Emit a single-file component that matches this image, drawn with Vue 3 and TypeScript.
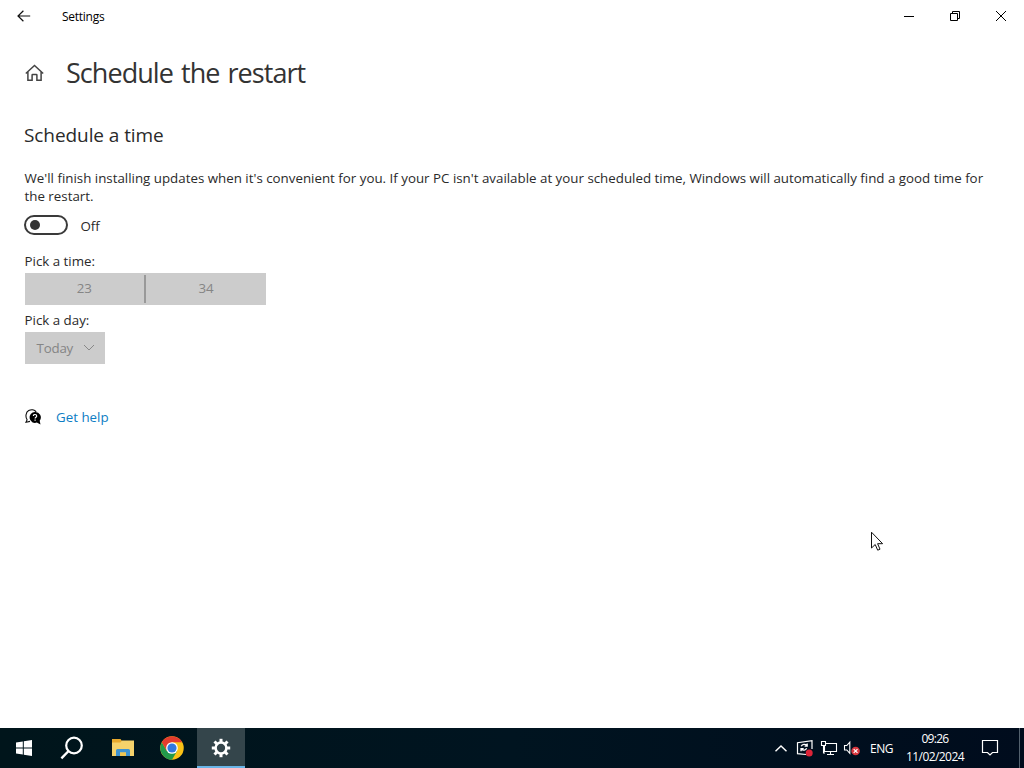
<script setup lang="ts">
import { ref } from 'vue'

const scheduled = ref(false)
const hour = ref('23')
const minute = ref('34')
const day = ref('Today')
const gearTeeth = [0, 45, 90, 135, 180, 225, 270, 315]
</script>

<template>
  <div class="screen">
    <header class="titlebar">
      <button class="back" aria-label="Back">
        <svg width="14" height="12" viewBox="0 0 14 12"><path d="M6.4 0.8 1 6l5.4 5.2M1 6h12.2" fill="none" stroke="#111" stroke-width="1.2" /></svg>
      </button>
      <span class="app-name">Settings</span>
      <div class="window-buttons">
        <button aria-label="Minimize"><svg width="12" height="12"><path d="M1 6.5h10" stroke="#000" /></svg></button>
        <button aria-label="Restore"><svg width="12" height="12"><path d="M1.5 3.5h7v7h-7zM3.5 3.5v-2h7v7h-2" fill="none" stroke="#000" /></svg></button>
        <button aria-label="Close"><svg width="12" height="12"><path d="m1 1 10 10M11 1 1 11" stroke="#000" /></svg></button>
      </div>
    </header>

    <main class="content">
      <div class="heading">
        <svg class="home" width="19" height="18" viewBox="0 0 19 18"><path d="M.8 9.500 9.500 1.500l8.700 8M2.900 8V16.300h4.200v-5.300q0-.6.6-.6h3.600q.6 0 .6.6v5.300h4.200V8" fill="none" stroke="#444" stroke-width="1.500" /></svg>
        <h1>Schedule the restart</h1>
      </div>
      <h2>Schedule a time</h2>
      <p class="description"><span class="line">We'll finish installing updates when it's convenient for you. If your PC isn't available at your scheduled time, Windows will automatically find a good time for</span> <span class="line">the restart.</span></p>
      <div class="toggle-row">
        <button class="toggle" role="switch" :aria-checked="scheduled"><span class="knob"></span></button>
        <span class="state">{{ scheduled ? 'On' : 'Off' }}</span>
      </div>
      <div class="label time-label">Pick a time:</div>
      <div class="time-picker">
        <span>{{ hour }}</span>
        <i class="divider"></i>
        <span>{{ minute }}</span>
      </div>
      <div class="label day-label">Pick a day:</div>
      <div class="day-picker">
        <span>{{ day }}</span>
        <svg width="12" height="8" viewBox="0 0 12 8"><path d="m1 1 5 5 5-5" fill="none" stroke="#888" stroke-width="1" /></svg>
      </div>
      <div class="help">
        <svg width="17" height="17" viewBox="0 0 17 17">
          <path d="M2.200 10.800C.2 8.200.6 3.200 3.700 1.500 6.300.2 9.600.7 11.200 2.900M2.200 10.600 1 13.200l4-.8" fill="none" stroke="#111" stroke-width="1.100" />
          <path d="M9.900 2.900a5.500 5.500 0 1 0 1.900 10.700l3.700 1.800-.8-3.700A5.500 5.500 0 0 0 9.900 2.900z" fill="#000" />
          <path d="M8.400 6.900c0-1.900 3.300-1.800 3.300.1 0 1.300-1.600 1.300-1.600 2.600M10.100 10.600v1.200" fill="none" stroke="#fff" stroke-width="1.200" />
        </svg>
        <a>Get help</a>
      </div>
    </main>

    <footer class="taskbar">
      <div class="apps">
        <div class="task">
          <svg width="18" height="18" viewBox="0 0 18 18"><path d="M1 3.400 7.800 2.400V8.500H1zM8.800 2.300 17 1v7.500H8.800zM1 9.500h6.800v6.100L1 14.600zM8.800 9.500H17V17l-8.200-1.200z" fill="#fff" /></svg>
        </div>
        <div class="task">
          <svg width="24" height="24" viewBox="0 0 24 24"><circle cx="14" cy="9.500" r="7.800" fill="none" stroke="#fff" stroke-width="2.200" /><path d="M8.600 15 1.400 22.300" stroke="#fff" stroke-width="2.400" /></svg>
        </div>
        <div class="task explorer">
          <svg width="24" height="20" viewBox="0 0 24 20">
            <path d="M1 1h8.500l1.500 2v3H1z" fill="#e7a92d" />
            <path d="M1 4.500h8.500l1.500-2h12V18H1z" fill="#f5d26b" />
            <path d="M5 18v-5.500q0-1.500 1.500-1.500h11q1.500 0 1.500 1.500V18h-4v-3.500H9V18z" fill="#3e93d1" />
            <path d="M9 14.500h6V18H9z" fill="#efc551" />
          </svg>
        </div>
        <div class="task chrome">
          <svg width="24" height="24" viewBox="0 0 48 48">
            <circle cx="24" cy="24" r="23.500" fill="#fbc116" />
            <path d="M3.650 12.250A23.500 23.500 0 0 0 24 47.500L34.200 29.900 24 24 13.800 29.900z" fill="#229a4b" />
            <path d="M3.650 12.250A23.500 23.500 0 0 1 44.350 12.250H24L13.800 29.900z" fill="#e33b2e" />
            <circle cx="24" cy="24" r="11.700" fill="#fff" /><circle cx="24" cy="24" r="9.200" fill="#3178df" />
          </svg>
        </div>
        <div class="task active">
          <svg width="20" height="20" viewBox="-10 -10 20 20">
            <rect v-for="angle in gearTeeth" :key="angle" x="-1.500" y="-9.200" width="3" height="4.200" fill="#fff" :transform="`rotate(${angle})`" />
            <circle r="5.400" fill="none" stroke="#fff" stroke-width="2.500" />
          </svg>
        </div>
      </div>

      <div class="tray">
        <svg class="expand" width="14" height="9" viewBox="0 0 14 9"><path d="m1.500 7.300 5.500-5.400 5.500 5.400" fill="none" stroke="#fff" stroke-width="1.400" /></svg>
        <svg class="update" width="18" height="18" viewBox="0 0 18 18">
          <path d="M10 15.500 1.500 14.700V3.700L16 1.700V10" fill="none" stroke="#fff" stroke-width="1.200" />
          <path d="M5.200 7.300c1-2.300 4.200-2.500 5.600-.7M11.200 4.500v2.700H8.600M10.600 9.300c-.9 2-3.600 2.400-5 .9M5 12.300V9.600h2.700" fill="none" stroke="#fff" stroke-width="1.300" />
          <circle cx="13.200" cy="14" r="3.500" fill="#dc2438" />
        </svg>
        <svg class="network" width="18" height="16" viewBox="0 0 18 16"><path d="M6 3.500h10.500v8H4.500V6M10.500 11.500v3M7 14.500h7M1.500 1.500h4v4h-4zM3.500 5.500v7.500H5" fill="none" stroke="#fff" stroke-width="1.100" /></svg>
        <svg class="volume" width="18" height="16" viewBox="0 0 18 16">
          <path d="M1.500 5.500h2.300l3-3.400v11.300l-3-3.400H1.500z" fill="none" stroke="#fff" stroke-width="1.100" />
          <circle cx="12.600" cy="11" r="4.300" fill="#d9363e" /><path d="m10.700 9.100 3.800 3.800m0-3.800-3.800 3.800" stroke="#fff" stroke-width="1.200" />
        </svg>
        <span class="language">ENG</span>
        <div class="clock"><span class="hours">09:26</span><span class="date">11/02/2024</span></div>
        <svg class="notifications" width="18" height="18" viewBox="0 0 18 18"><path d="M1.500 1.500h15v12h-5L9 16l-2.500-2.500h-5z" fill="none" stroke="#fff" stroke-width="1.200" /></svg>
        <i class="show-desktop"></i>
      </div>
    </footer>

    <svg class="cursor" width="14" height="21" viewBox="0 0 14 21"><path d="M1.500 1.200V17l3.700-3.500 2.500 5.700 2.300-1-2.400-5.500h5z" fill="#fff" stroke="#111" stroke-width="1" /></svg>
  </div>
</template>

<style>
body { margin: 0; overflow: hidden; }
</style>

<style scoped>
.screen {
  position: relative;
  width: 1024px;
  height: 768px;
  display: flex;
  flex-direction: column;
  overflow: hidden;
  background: #fff;
  color: #2a2a2a;
  font-family: "Open Sans", "Noto Sans", sans-serif;
  font-size: 13.330px;
}
svg { display: block; flex: none; }
button { border: 0; padding: 0; background: none; font: inherit; }
.titlebar { display: flex; align-items: center; height: 32px; flex: none; color: #000; }
.back { width: 48px; display: flex; justify-content: center; }
.app-name { margin-left: 14px; font-size: 12px; letter-spacing: -.27px; line-height: 16px; padding-top: 2px; }
.window-buttons { display: flex; margin-left: auto; }
.window-buttons button { width: 46px; height: 32px; display: grid; place-items: center; }
.content { flex: 1; padding: 22px 24px 0 24.500px; }
.heading { display: flex; align-items: center; height: 36px; }
.home { margin-top: 1px; }
h1 { margin: 0 0 0 22.500px; padding-top: 1px; font-size: 27px; font-weight: 400; line-height: 37px; letter-spacing: -.95px; word-spacing: 2px; white-space: nowrap; color: #333; }
h2 { margin: 32px 0 0 -.5px; font-size: 19px; font-weight: 400; line-height: 26px; letter-spacing: -.08px; }
.description { margin: 21px 0 0; line-height: 18px; }
.line { display: block; white-space: nowrap; }
.toggle-row { display: flex; align-items: center; height: 20px; margin-top: 10px; }
.toggle { width: 44px; height: 20px; margin-left: -.5px; box-sizing: border-box; border: 2px solid #3a3a3a; border-radius: 10px; padding-left: 3.500px; display: flex; align-items: center; }
.knob { width: 10px; height: 10px; border-radius: 50%; background: #333; }
.state { margin-left: 12.500px; line-height: 20px; padding-top: 2px; }
.label { line-height: 18px; }
.time-label { margin-top: 17px; }
.time-picker { display: flex; align-items: center; width: 241.500px; height: 32px; margin-top: 3px; background: #ccc; color: #858585; }
.time-picker span { flex: 1; text-align: center; line-height: 18px; padding-bottom: 2px; }
.divider { width: 2px; height: 28px; background: #999; }
.day-label { margin-top: 6px; }
.day-picker { width: 80.400px; height: 32px; margin-top: 3px; box-sizing: border-box; padding: 0 10px 0 12px; display: flex; align-items: center; justify-content: space-between; background: #ccc; color: #858585; }
.day-picker span { letter-spacing: -.2px; }
.help { display: flex; align-items: center; height: 20px; margin-top: 43px; }
.help a { margin-left: 14.500px; color: #0d7dc4; }
.taskbar { height: 40px; flex: none; display: flex; justify-content: space-between; color: #fff; background: linear-gradient(90deg, #00151b, #001420 50%, #000c1d); }
.apps, .tray { display: flex; align-items: center; }
.task { width: 48px; height: 40px; display: grid; place-items: center; }
.explorer { width: 53px; }
.chrome { width: 46px; margin-right: 2px; }
.active { background: #34454b; box-shadow: inset 0 -2px #69b5e8; }
.expand { margin-right: 8px; }
.update { margin-right: 6px; }
.network { margin-right: 5px; }
.language { margin-left: 9px; width: 24px; font-size: 12px; letter-spacing: -.5px; }
.clock { width: 60px; margin-left: 11px; display: flex; flex-direction: column; align-items: center; font-size: 12px; line-height: 18px; }
.hours { letter-spacing: -.7px; }
.date { letter-spacing: -.58px; }
.notifications { margin-left: 16px; }
.show-desktop { width: 5px; height: 40px; margin-left: 20px; border-left: 1px solid #53616e; box-sizing: border-box; }
.cursor { position: absolute; left: 870px; top: 531px; }
</style>
